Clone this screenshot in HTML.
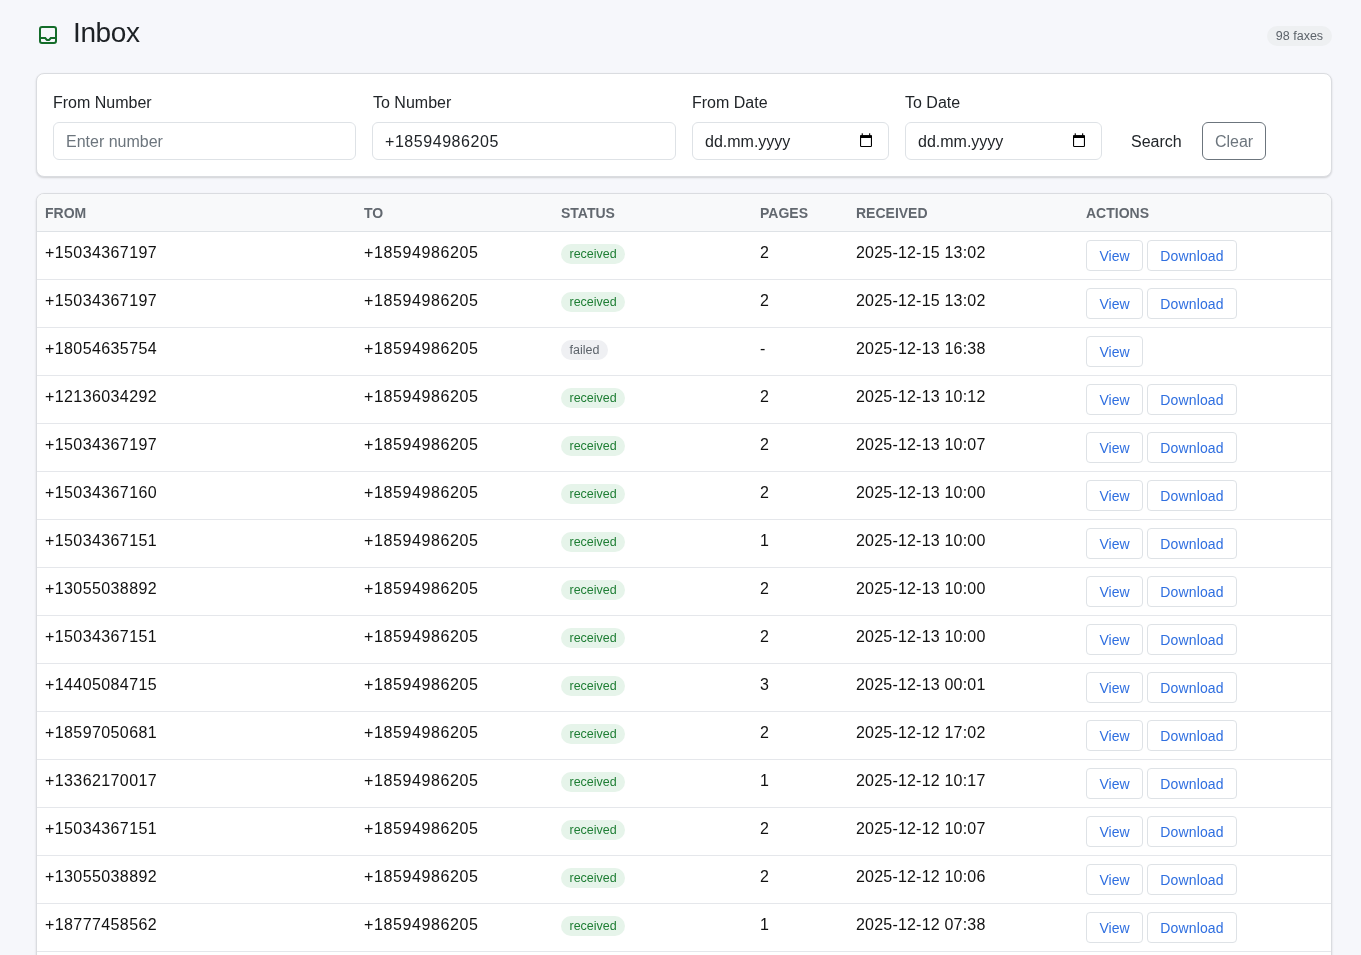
<!DOCTYPE html>
<html><head><meta charset="utf-8">
<style>
*{box-sizing:border-box;margin:0;padding:0}
html,body{width:1361px;height:955px;overflow:hidden}
body{background:#f6f7fb;font-family:"Liberation Sans",sans-serif;color:#212529;position:relative}
.icon{position:absolute;left:39px;top:26px;width:18px;height:18px}
h1{position:absolute;left:73px;top:15px;font-size:28px;font-weight:400;line-height:36px;color:#1d2125;letter-spacing:-.4px}
.count{position:absolute;left:1267px;top:26px;width:65px;height:20px;border-radius:10px;background:#eef0f2;color:#5c636a;font-size:12.5px;line-height:21px;text-align:center}
.card{position:absolute;background:#fff;border:1px solid #dadce0;border-radius:8px;box-shadow:0 1px 2px rgba(0,0,0,.16)}
.filter{left:36px;top:73px;width:1296px;height:104px}
.lbl{position:absolute;top:93px;font-size:16px;line-height:20px;color:#212529}
.inp{position:absolute;top:122px;height:38px;border:1px solid #dee2e6;border-radius:6px;background:#fff;font-size:16px;line-height:38px;padding-left:12px;color:#212529}
.ph{color:#6c757d}
.cal{position:absolute;right:15px;top:10px;width:13px;height:14px}
.search{position:absolute;left:1131px;top:123px;height:38px;line-height:38px;font-size:16px;color:#212529}
.clear{position:absolute;left:1202px;top:122px;width:64px;height:38px;border:1px solid #6c757d;border-radius:6px;line-height:38px;text-align:center;font-size:16px;color:#6c757d}
.tbl{left:36px;top:193px;width:1296px;height:800px;overflow:hidden}
table{border-collapse:collapse;width:100%;table-layout:fixed}
th{height:37px;background:#f8f9fa;text-align:left;font-size:14px;font-weight:700;letter-spacing:0;color:#62686f;text-transform:uppercase;border-bottom:1px solid #dee2e6;padding:1px 0 0 8px}
td{height:48px;border-bottom:1px solid #e5e7eb;font-size:16px;line-height:20px;padding:11px 0 0 8px;vertical-align:top;color:#111;letter-spacing:.4px}
.c5{letter-spacing:.2px}
td.c2{letter-spacing:.6px}
td.c3{padding-top:11px;letter-spacing:0}
td.c6{padding-top:8px;letter-spacing:0}
.badge{display:inline-block;font-size:12.5px;line-height:20px;height:20px;padding:0 8.5px;border-radius:10px}
.badge.received{background:#e6f4ea;color:#1e7e34}
.badge.failed{background:#eff0f3;color:#5c636a}
.btn{display:inline-block;height:31px;line-height:31px;border:1px solid #dee2e6;border-radius:4px;padding:0;width:57px;text-align:center;font-size:14px;color:#2f6fe0;margin-right:4px;background:#fff;vertical-align:top}
.btn.dl{width:90px;letter-spacing:.15px}
</style></head><body><div id="wrap" style="position:absolute;left:0;top:0;width:1361px;height:955px;will-change:transform">
<svg class="icon" viewBox="0 0 18 18"><rect x="1" y="1" width="16" height="16" rx="2" fill="none" stroke="#146c2a" stroke-width="2"/><path d="M1 12 H6.2 L7.7 13.7 Q8 14 8.5 14 H9.5 Q10 14 10.3 13.7 L11.8 12 H17" fill="none" stroke="#146c2a" stroke-width="2"/></svg>
<h1>Inbox</h1>
<div class="count">98 faxes</div>
<div class="card filter"></div>
<div class="lbl" style="left:53px">From Number</div>
<div class="lbl" style="left:373px">To Number</div>
<div class="lbl" style="left:692px">From Date</div>
<div class="lbl" style="left:905px">To Date</div>
<div class="inp ph" style="left:53px;width:303px">Enter number</div>
<div class="inp" style="left:372px;width:304px;letter-spacing:.55px">+18594986205</div>
<div class="inp" style="left:692px;width:197px">dd.mm.yyyy<svg class="cal" viewBox="0 0 13 14"><rect x="0.55" y="2.85" width="10.9" height="10.6" rx="0.8" fill="none" stroke="#000" stroke-width="1.1"/><rect x="0" y="2.3" width="12" height="2.6" rx="0.6" fill="#000"/><rect x="1.7" y="0.3" width="1.1" height="2.4" fill="#000"/><rect x="9.1" y="0.3" width="1.1" height="2.4" fill="#000"/></svg></div>
<div class="inp" style="left:905px;width:197px">dd.mm.yyyy<svg class="cal" viewBox="0 0 13 14"><rect x="0.55" y="2.85" width="10.9" height="10.6" rx="0.8" fill="none" stroke="#000" stroke-width="1.1"/><rect x="0" y="2.3" width="12" height="2.6" rx="0.6" fill="#000"/><rect x="1.7" y="0.3" width="1.1" height="2.4" fill="#000"/><rect x="9.1" y="0.3" width="1.1" height="2.4" fill="#000"/></svg></div>
<div class="search">Search</div>
<div class="clear">Clear</div>
<div class="card tbl">
<table>
<colgroup><col style="width:319px"><col style="width:197px"><col style="width:199px"><col style="width:96px"><col style="width:230px"><col></colgroup>
<thead><tr><th>From</th><th>To</th><th>Status</th><th>Pages</th><th>Received</th><th>Actions</th></tr></thead>
<tbody>
<tr><td class="c1">+15034367197</td><td class="c2">+18594986205</td><td class="c3"><span class="badge received">received</span></td><td class="c4">2</td><td class="c5">2025-12-15 13:02</td><td class="c6"><span class="btn">View</span><span class="btn dl">Download</span></td></tr>
<tr><td class="c1">+15034367197</td><td class="c2">+18594986205</td><td class="c3"><span class="badge received">received</span></td><td class="c4">2</td><td class="c5">2025-12-15 13:02</td><td class="c6"><span class="btn">View</span><span class="btn dl">Download</span></td></tr>
<tr><td class="c1">+18054635754</td><td class="c2">+18594986205</td><td class="c3"><span class="badge failed">failed</span></td><td class="c4">-</td><td class="c5">2025-12-13 16:38</td><td class="c6"><span class="btn">View</span></td></tr>
<tr><td class="c1">+12136034292</td><td class="c2">+18594986205</td><td class="c3"><span class="badge received">received</span></td><td class="c4">2</td><td class="c5">2025-12-13 10:12</td><td class="c6"><span class="btn">View</span><span class="btn dl">Download</span></td></tr>
<tr><td class="c1">+15034367197</td><td class="c2">+18594986205</td><td class="c3"><span class="badge received">received</span></td><td class="c4">2</td><td class="c5">2025-12-13 10:07</td><td class="c6"><span class="btn">View</span><span class="btn dl">Download</span></td></tr>
<tr><td class="c1">+15034367160</td><td class="c2">+18594986205</td><td class="c3"><span class="badge received">received</span></td><td class="c4">2</td><td class="c5">2025-12-13 10:00</td><td class="c6"><span class="btn">View</span><span class="btn dl">Download</span></td></tr>
<tr><td class="c1">+15034367151</td><td class="c2">+18594986205</td><td class="c3"><span class="badge received">received</span></td><td class="c4">1</td><td class="c5">2025-12-13 10:00</td><td class="c6"><span class="btn">View</span><span class="btn dl">Download</span></td></tr>
<tr><td class="c1">+13055038892</td><td class="c2">+18594986205</td><td class="c3"><span class="badge received">received</span></td><td class="c4">2</td><td class="c5">2025-12-13 10:00</td><td class="c6"><span class="btn">View</span><span class="btn dl">Download</span></td></tr>
<tr><td class="c1">+15034367151</td><td class="c2">+18594986205</td><td class="c3"><span class="badge received">received</span></td><td class="c4">2</td><td class="c5">2025-12-13 10:00</td><td class="c6"><span class="btn">View</span><span class="btn dl">Download</span></td></tr>
<tr><td class="c1">+14405084715</td><td class="c2">+18594986205</td><td class="c3"><span class="badge received">received</span></td><td class="c4">3</td><td class="c5">2025-12-13 00:01</td><td class="c6"><span class="btn">View</span><span class="btn dl">Download</span></td></tr>
<tr><td class="c1">+18597050681</td><td class="c2">+18594986205</td><td class="c3"><span class="badge received">received</span></td><td class="c4">2</td><td class="c5">2025-12-12 17:02</td><td class="c6"><span class="btn">View</span><span class="btn dl">Download</span></td></tr>
<tr><td class="c1">+13362170017</td><td class="c2">+18594986205</td><td class="c3"><span class="badge received">received</span></td><td class="c4">1</td><td class="c5">2025-12-12 10:17</td><td class="c6"><span class="btn">View</span><span class="btn dl">Download</span></td></tr>
<tr><td class="c1">+15034367151</td><td class="c2">+18594986205</td><td class="c3"><span class="badge received">received</span></td><td class="c4">2</td><td class="c5">2025-12-12 10:07</td><td class="c6"><span class="btn">View</span><span class="btn dl">Download</span></td></tr>
<tr><td class="c1">+13055038892</td><td class="c2">+18594986205</td><td class="c3"><span class="badge received">received</span></td><td class="c4">2</td><td class="c5">2025-12-12 10:06</td><td class="c6"><span class="btn">View</span><span class="btn dl">Download</span></td></tr>
<tr><td class="c1">+18777458562</td><td class="c2">+18594986205</td><td class="c3"><span class="badge received">received</span></td><td class="c4">1</td><td class="c5">2025-12-12 07:38</td><td class="c6"><span class="btn">View</span><span class="btn dl">Download</span></td></tr>
<tr><td class="c1">+15034367151</td><td class="c2">+18594986205</td><td class="c3"><span class="badge received">received</span></td><td class="c4">2</td><td class="c5">2025-12-12 07:00</td><td class="c6"><span class="btn">View</span><span class="btn dl">Download</span></td></tr>
</tbody></table>
</div>
</div></body></html>
